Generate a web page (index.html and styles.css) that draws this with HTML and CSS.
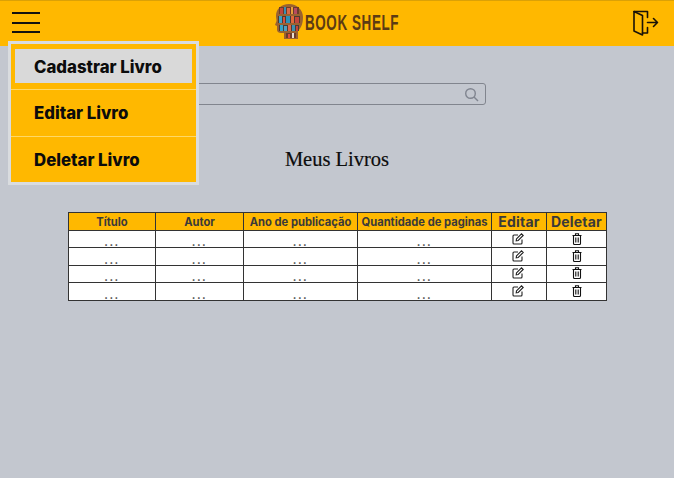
FILE: index.html
```html
<!DOCTYPE html>
<html lang="pt-BR">
<head>
    <meta charset="utf-8" />
    <title>Book Shelf</title>
    <link rel="stylesheet" href="styles.css">
</head>
<body>
    <header class="topbar">
        <button class="menu-btn" aria-label="Menu"><span></span><span></span><span></span></button>
        <div class="brand">
            <svg class="brand-logo" width="28" height="35" viewBox="0 0 28 35">
                <path d="M14 0C6 0 1 5 1 12c0 2 .5 3 .5 5L0 21l2 1v4c0 2 2 3 4 3h3v6h14v-8c3-3 5-7 5-14C28 6 22 0 14 0z" fill="#9a6230"/>
                <rect x="4" y="3" width="20" height="7" fill="#6b3b2c"/>
                <rect x="3" y="12" width="22" height="7" fill="#4a3a34"/>
                <rect x="4" y="21" width="20" height="6" fill="#4a3a34"/>
                <rect x="11" y="29" width="10" height="5" fill="#6b3b2c"/>
                <rect x="5" y="4" width="3" height="6" fill="#c2453c"/>
                <rect x="9" y="3" width="2" height="7" fill="#3d8fb0"/>
                <rect x="12" y="4" width="3" height="6" fill="#d9694a"/>
                <rect x="16" y="3" width="2" height="7" fill="#e8a03a"/>
                <rect x="19" y="4" width="3" height="6" fill="#b84b5e"/>
                <rect x="4" y="12" width="3" height="7" fill="#3fa0c0"/>
                <rect x="8" y="13" width="2" height="6" fill="#d94f3d"/>
                <rect x="11" y="12" width="4" height="7" fill="#2f8fb5"/>
                <rect x="16" y="12" width="3" height="7" fill="#e0683a"/>
                <rect x="20" y="13" width="4" height="6" fill="#c2453c"/>
                <rect x="5" y="21" width="3" height="6" fill="#35a3c4"/>
                <rect x="9" y="22" width="3" height="5" fill="#4f9fbf"/>
                <rect x="13" y="21" width="3" height="6" fill="#d9694a"/>
                <rect x="17" y="21" width="3" height="6" fill="#3d8fb0"/>
                <rect x="21" y="22" width="2" height="5" fill="#c2453c"/>
                <rect x="13" y="30" width="2" height="4" fill="#d94f3d"/>
                <rect x="17" y="29" width="2" height="5" fill="#e8e0d0"/>
            </svg>
            <span class="brand-name">BOOK SHELF</span>
        </div>
        <button class="exit-btn" aria-label="Sair">
            <svg width="26" height="26" viewBox="0 0 26 26" fill="none" stroke="#1a1208" stroke-width="1.6" stroke-linejoin="round" stroke-linecap="round">
                <path d="M1 1.500h13.500v6M14.500 17.500v5.500h-5"/>
                <path d="M1 1.500v19.500l8.500 4V5.500z"/>
                <path d="M14.500 12.500h10M20.500 8.500l4 4-4 4"/>
            </svg>
        </button>
    </header>

    <nav class="side-menu">
        <div class="side-item active"><a class="side-link" href="#">Cadastrar Livro</a></div>
        <div class="side-item"><a class="side-link" href="#">Editar Livro</a></div>
        <div class="side-item"><a class="side-link" href="#">Deletar Livro</a></div>
    </nav>

    <main class="content">
        <div class="search">
            <input type="text" class="search-input">
            <svg class="search-icon" width="15" height="15" viewBox="0 0 15 15" fill="none" stroke="#808590" stroke-width="1.400">
                <circle cx="6.500" cy="6.500" r="4.800"/>
                <path d="M10 10l4 4"/>
            </svg>
        </div>

        <h1 class="page-title">Meus Livros</h1>

        <table class="books">
            <thead>
                <tr>
                    <th class="col-title">Título</th>
                    <th class="col-author">Autor</th>
                    <th class="col-year">Ano de publicação</th>
                    <th class="col-qty">Quantidade de paginas</th>
                    <th class="col-edit big">Editar</th>
                    <th class="col-del big">Deletar</th>
                </tr>
            </thead>
            <tbody>
                <tr>
                    <td>...</td><td>...</td><td>...</td><td>...</td>
                    <td class="icon-cell edit-cell"><svg width="12" height="12" viewBox="0 0 12 12" fill="none" stroke="#222" stroke-width="1.100"><path d="M6 2H2a1 1 0 0 0-1 1v7a1 1 0 0 0 1 1h7a1 1 0 0 0 1-1V6.500"/><path d="M4.500 5.800L9.500 .8l1.700 1.700-5 5-2 .3z"/></svg></td>
                    <td class="icon-cell"><svg width="10" height="12" viewBox="0 0 10 12" fill="none" stroke="#111" stroke-width="1.100"><path d="M.5 2.500h9M3.500 2.500V.8h3v1.700M1.500 2.500v8a1 1 0 0 0 1 1h5a1 1 0 0 0 1-1v-8M3.800 4.500v5M6.200 4.500v5"/></svg></td>
                </tr>
                <tr>
                    <td>...</td><td>...</td><td>...</td><td>...</td>
                    <td class="icon-cell edit-cell"><svg width="12" height="12" viewBox="0 0 12 12" fill="none" stroke="#222" stroke-width="1.100"><path d="M6 2H2a1 1 0 0 0-1 1v7a1 1 0 0 0 1 1h7a1 1 0 0 0 1-1V6.500"/><path d="M4.500 5.800L9.500 .8l1.700 1.700-5 5-2 .3z"/></svg></td>
                    <td class="icon-cell"><svg width="10" height="12" viewBox="0 0 10 12" fill="none" stroke="#111" stroke-width="1.100"><path d="M.5 2.500h9M3.500 2.500V.8h3v1.700M1.500 2.500v8a1 1 0 0 0 1 1h5a1 1 0 0 0 1-1v-8M3.800 4.500v5M6.200 4.500v5"/></svg></td>
                </tr>
                <tr>
                    <td>...</td><td>...</td><td>...</td><td>...</td>
                    <td class="icon-cell edit-cell"><svg width="12" height="12" viewBox="0 0 12 12" fill="none" stroke="#222" stroke-width="1.100"><path d="M6 2H2a1 1 0 0 0-1 1v7a1 1 0 0 0 1 1h7a1 1 0 0 0 1-1V6.500"/><path d="M4.500 5.800L9.500 .8l1.700 1.700-5 5-2 .3z"/></svg></td>
                    <td class="icon-cell"><svg width="10" height="12" viewBox="0 0 10 12" fill="none" stroke="#111" stroke-width="1.100"><path d="M.5 2.500h9M3.500 2.500V.8h3v1.700M1.500 2.500v8a1 1 0 0 0 1 1h5a1 1 0 0 0 1-1v-8M3.800 4.500v5M6.200 4.500v5"/></svg></td>
                </tr>
                <tr>
                    <td>...</td><td>...</td><td>...</td><td>...</td>
                    <td class="icon-cell edit-cell"><svg width="12" height="12" viewBox="0 0 12 12" fill="none" stroke="#222" stroke-width="1.100"><path d="M6 2H2a1 1 0 0 0-1 1v7a1 1 0 0 0 1 1h7a1 1 0 0 0 1-1V6.500"/><path d="M4.500 5.800L9.500 .8l1.700 1.700-5 5-2 .3z"/></svg></td>
                    <td class="icon-cell"><svg width="10" height="12" viewBox="0 0 10 12" fill="none" stroke="#111" stroke-width="1.100"><path d="M.5 2.500h9M3.500 2.500V.8h3v1.700M1.500 2.500v8a1 1 0 0 0 1 1h5a1 1 0 0 0 1-1v-8M3.800 4.500v5M6.200 4.500v5"/></svg></td>
                </tr>
            </tbody>
        </table>
    </main>
</body>
</html>
```

FILE: styles.css
```css
html, body {
    height: 100%;
}
body {
    margin: 0;
    background-color: #c3c7cf;
    font-family: Inter, "Liberation Sans", sans-serif;
    overflow: hidden;
}
.topbar {
    box-sizing: border-box;
    height: 46px;
    display: flex;
    align-items: center;
    justify-content: space-between;
    padding: 0 15px 0 12px;
    background-color: #ffb800;
    border-top: 1px solid #dba106;
    position: relative;
}
.menu-btn {
    width: 28px;
    padding: 0;
    margin-top: -2px;
    background: none;
    border: 0;
    display: flex;
    flex-direction: column;
    gap: 7.500px;
}
.menu-btn span {
    display: block;
    height: 2px;
    background-color: #111;
}
.brand {
    position: absolute;
    left: 275px;
    top: 3px;
    display: flex;
    align-items: center;
    gap: 2px;
}
.brand-name {
    margin-top: 2px;
    font-family: "Liberation Sans", sans-serif;
    font-weight: 700;
    font-size: 22px;
    letter-spacing: 1px;
    color: #5c3b14;
    transform: scaleX(.61);
    transform-origin: left center;
    white-space: nowrap;
}
.exit-btn {
    padding: 0;
    background: none;
    border: 0;
    display: flex;
    margin-top: -2px;
}
.side-menu {
    position: absolute;
    z-index: 2;
    left: 8px;
    top: 41px;
    width: 185px;
    display: flex;
    flex-direction: column;
    background-color: #ffb800;
    border: 3px solid #d9dcdf;
}
.side-item {
    height: 47px;
    box-sizing: border-box;
    display: flex;
    border-bottom: 1px solid #ffd866;
}
.side-item:first-child {
    height: 46px;
    padding: 5px 4px 6px;
}
.side-item:last-child {
    height: 45px;
    border-bottom: 0;
}
.side-link {
    flex: 1;
    display: flex;
    align-items: center;
    padding-left: 23px;
    font-weight: 800;
    font-size: 16.800px;
    color: #0c0c0c;
    text-decoration: none;
}
.active .side-link {
    padding-left: 19px;
    padding-top: 1px;
    background-color: #d9d9d9;
}
.content {
    display: flex;
    flex-direction: column;
    align-items: center;
}
.search {
    position: relative;
    width: 298px;
    height: 22px;
    margin-top: 37px;
}
.search-input {
    display: block;
    width: 100%;
    height: 100%;
    box-sizing: border-box;
    padding: 0;
    background: transparent;
    border: 1px solid #81858e;
    border-radius: 3px;
}
.search-icon {
    position: absolute;
    right: 7px;
    top: 4px;
}
.page-title {
    margin: 42px 0 0;
    height: 24px;
    font-family: "Liberation Serif", serif;
    font-weight: 400;
    font-size: 20.500px;
    line-height: 24px;
    color: #0c0c0c;
    -webkit-text-stroke: .2px #0c0c0c;
}
.books {
    margin: 41px 0 0 1px;
    width: 538px;
    table-layout: fixed;
    border-collapse: collapse;
    background-color: #fff;
    border: 1px solid #555;
}
.books th {
    height: 16px;
    padding: 0;
    box-sizing: border-box;
    background-color: #ffb800;
    border: 1px solid #333;
    font-size: 11.200px;
    font-weight: 700;
    color: #3a3a3a;
    white-space: nowrap;
}
.books th.big {
    font-size: 14px;
    letter-spacing: .2px;
}
.books td {
    height: 17.400px;
    padding: 0;
    box-sizing: border-box;
    border: 1px solid #333;
    text-align: center;
    vertical-align: bottom;
    font-size: 11px;
    font-weight: 700;
    line-height: 10px;
    color: #444;
    letter-spacing: 1.500px;
}
.books td.icon-cell {
    vertical-align: middle;
    line-height: 0;
    padding-bottom: 1px;
}
.books td.edit-cell {
    padding-right: 3px;
}
.col-title { width: 87px; }
.col-author { width: 88px; }
.col-year { width: 114px; }
.col-qty { width: 134px; }
.col-edit { width: 55px; }
.col-del { width: 60px; }
```
